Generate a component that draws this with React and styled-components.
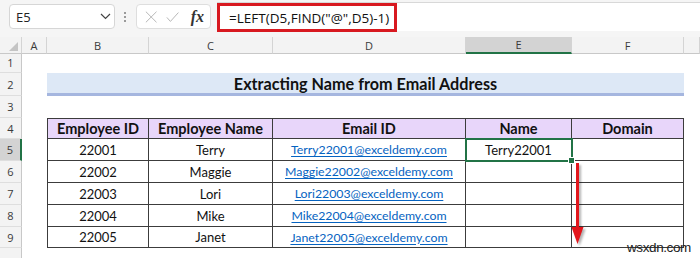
import React from "react";
import styled, { createGlobalStyle } from "styled-components";

const GlobalStyle = createGlobalStyle`
  html, body {
    margin: 0;
    padding: 0;
    background: #ffffff;
  }
  body {
    width: 700px;
    height: 258px;
    overflow: hidden;
    font-family: Lato, "Liberation Sans", sans-serif;
  }
`;

const COLS = "22px 25px 102px 124px 193px 106px 112px 1fr";
const GREEN = "#217346";
const GRID = "#3c3c3c";

const Page = styled.div`
  position: relative;
  width: 700px;
  height: 258px;
  overflow: hidden;
`;

/* formula bar */

const FormulaBar = styled.div`
  display: flex;
  align-items: center;
  height: 37px;
  padding-left: 9px;
  background: #f5f5f5;
  font-family: "Open Sans", "Noto Sans", sans-serif;
`;

const NameBox = styled.div`
  display: flex;
  align-items: center;
  justify-content: space-between;
  box-sizing: border-box;
  width: 106px;
  height: 25px;
  margin-top: -4px;
  padding: 0 3px 0 6px;
  background: #fff;
  border: 1px solid #d6d6d6;
  border-radius: 4px;
  font-size: 13px;
  color: #222;
`;

const Dots = styled.div`
  display: flex;
  flex-direction: column;
  gap: 2px;
  margin: -4px 10px 0 9px;

  span {
    width: 2px;
    height: 2px;
    background: #9a9a9a;
  }
`;

const FxBox = styled.div`
  display: flex;
  align-items: center;
  gap: 9px;
  box-sizing: border-box;
  width: 75px;
  height: 25px;
  margin-top: -4px;
  padding: 0 6px 0 8px;
  background: #fff;
  border: 1px solid #dedede;
  border-radius: 4px;
`;

const Fx = styled.span`
  margin-left: 2px;
  font-family: "Liberation Serif", serif;
  font-style: italic;
  font-weight: 700;
  font-size: 16px;
  color: #333;
`;

const FormulaField = styled.div`
  flex: 1;
  display: flex;
  align-items: center;
  height: 28px;
  margin-left: 6px;
  margin-top: -4px;
  background: #fff;
  border-top: 1px solid #d8d8d8;
`;

const Highlight = styled.div`
  display: flex;
  align-items: center;
  box-sizing: border-box;
  width: 180px;
  height: 29px;
  margin-top: 1px;
  padding-left: 9px;
  border: 3px solid #d81920;
  font-size: 13.5px;
  color: #111;
  white-space: nowrap;
`;

/* sheet */

const Sheet = styled.div`
  display: flex;
  flex-direction: column;
`;

const Row = styled.div`
  display: grid;
  grid-template-columns: ${COLS};
  height: ${(p) => p.$h}px;
`;

const ColHead = styled.div`
  display: flex;
  align-items: center;
  justify-content: center;
  box-sizing: border-box;
  background: ${(p) => (p.$active ? "#d3d3d3" : "#f3f3f3")};
  border-right: 1px solid #d4d4d4;
  border-bottom: ${(p) => (p.$active ? `2px solid ${GREEN}` : "1px solid #c8c8c8")};
  font-family: "Open Sans", "Noto Sans", sans-serif;
  font-size: 11px;
  color: #3a3a3a;
`;

const Corner = styled.div`
  position: relative;
  box-sizing: border-box;
  background: #f3f3f3;
  border-right: 1px solid #d4d4d4;
  border-bottom: 1px solid #c8c8c8;

  &::after {
    content: "";
    position: absolute;
    right: 3px;
    bottom: 2px;
    border-left: 9px solid transparent;
    border-bottom: 9px solid #c4c4c4;
  }
`;

const RowHead = styled.div`
  display: flex;
  align-items: center;
  justify-content: center;
  box-sizing: border-box;
  background: ${(p) => (p.$active ? "#d3d3d3" : "#f3f3f3")};
  border-right: ${(p) => (p.$active ? `2px solid ${GREEN}` : "1px solid #c8c8c8")};
  border-bottom: 1px solid #dedede;
  font-family: "Open Sans", "Noto Sans", sans-serif;
  font-size: 11px;
  color: #3a3a3a;
`;

const Cell = styled.div`
  position: relative;
  display: flex;
  align-items: center;
  justify-content: center;
  box-sizing: border-box;
  min-width: 0;
  white-space: nowrap;
  color: #111;
  background: ${(p) => (p.$head ? "#e8d6fa" : "transparent")};
  font-weight: ${(p) => (p.$head ? 700 : 400)};
  font-size: ${(p) => (p.$head ? "14.5px" : "13px")};
  border-right: ${(p) => (p.$table ? `1px solid ${GRID}` : "none")};
  border-bottom: ${(p) => (p.$table ? `1px solid ${GRID}` : "none")};
  border-left: ${(p) => (p.$first ? `1px solid ${GRID}` : "none")};
  border-top: ${(p) => (p.$head ? `1px solid ${GRID}` : "none")};

  ${(p) =>
    p.$active &&
    `
    outline: 2px solid ${GREEN};
    outline-offset: -1px;
    z-index: 2;
    &::after {
      content: "";
      position: absolute;
      right: -4px;
      bottom: -4px;
      width: 5px;
      height: 5px;
      background: ${GREEN};
      border: 1px solid #fff;
    }
  `}
`;

const Link = styled.span`
  color: #0563c1;
  font-size: 12.3px;
  text-decoration: underline;
  text-underline-offset: 2px;
`;

const Title = styled.div`
  grid-column: span 5;
  display: flex;
  align-items: center;
  justify-content: center;
  box-sizing: border-box;
  background: #dde8f6;
  border-bottom: 3px solid #a5b6df;
  font-weight: 700;
  font-size: 16.2px;
  color: #111;
`;

const Arrow = styled.svg`
  position: absolute;
  left: 571px;
  top: 163px;
  filter: drop-shadow(2px 2px 1px rgba(0, 0, 0, 0.3));
`;

const Watermark = styled.div`
  position: absolute;
  left: 627px;
  top: 240px;
  font-family: "Liberation Sans", sans-serif;
  font-size: 13.5px;
  letter-spacing: -0.4px;
  color: #222;
`;

const LETTERS = ["A", "B", "C", "D", "E", "F", ""];

const people = [
  ["22001", "Terry", "Terry22001@exceldemy.com", "Terry22001"],
  ["22002", "Maggie", "Maggie22002@exceldemy.com", ""],
  ["22003", "Lori", "Lori22003@exceldemy.com", ""],
  ["22004", "Mike", "Mike22004@exceldemy.com", ""],
  ["22005", "Janet", "Janet22005@exceldemy.com", ""],
];

const heads = ["Employee ID", "Employee Name", "Email ID", "Name", "Domain"];
const dataHeights = [22, 22, 22, 22, 21];

const Blank = () => <Cell />;

export default function App() {
  return (
    <Page>
      <GlobalStyle />
      <FormulaBar>
        <NameBox>
          <span>E5</span>
          <svg width="11" height="7" viewBox="0 0 11 7">
            <path d="M1 1l4.5 4.5L10 1" fill="none" stroke="#444" strokeWidth="1.2" />
          </svg>
        </NameBox>
        <Dots>
          <span />
          <span />
          <span />
        </Dots>
        <FxBox>
          <svg width="14" height="14" viewBox="0 0 14 14">
            <path d="M1 1l12 12M13 1L1 13" stroke="#b5b5b5" strokeWidth="1.1" />
          </svg>
          <svg width="15" height="12" viewBox="0 0 15 12">
            <path d="M1 6.5l4 4.5L14 1" fill="none" stroke="#b5b5b5" strokeWidth="1.1" />
          </svg>
          <Fx>fx</Fx>
        </FxBox>
        <FormulaField>
          <Highlight>=LEFT(D5,FIND("@",D5)-1)</Highlight>
        </FormulaField>
      </FormulaBar>

      <Sheet>
        <Row $h={15}>
          <Corner />
          {LETTERS.map((l, i) => (
            <ColHead key={i} $active={l === "E"}>
              {l}
            </ColHead>
          ))}
        </Row>

        <Row $h={21}>
          <RowHead>1</RowHead>
        </Row>

        <Row $h={23}>
          <RowHead>2</RowHead>
          <Blank />
          <Title>Extracting Name from Email Address</Title>
        </Row>

        <Row $h={22}>
          <RowHead>3</RowHead>
        </Row>

        <Row $h={21}>
          <RowHead>4</RowHead>
          <Blank />
          {heads.map((h, i) => (
            <Cell key={h} $table $head $first={i === 0}>
              {h}
            </Cell>
          ))}
        </Row>

        {people.map((p, r) => (
          <Row key={p[0]} $h={dataHeights[r]}>
            <RowHead $active={r === 0}>{r + 5}</RowHead>
            <Blank />
            <Cell $table $first>
              {p[0]}
            </Cell>
            <Cell $table>{p[1]}</Cell>
            <Cell $table>
              <Link>{p[2]}</Link>
            </Cell>
            <Cell $table $active={r === 0}>
              {p[3]}
            </Cell>
            <Cell $table />
          </Row>
        ))}

        <Row $h={20}>
          <RowHead />
        </Row>
      </Sheet>

      <Arrow width="14" height="84" viewBox="0 0 14 84">
        <path d="M6.5 0v68" stroke="#e3161c" strokeWidth="3" />
        <path d="M0.5 64h12L6.5 81z" fill="#e3161c" />
      </Arrow>

      <Watermark>wsxdn.com</Watermark>
    </Page>
  );
}
